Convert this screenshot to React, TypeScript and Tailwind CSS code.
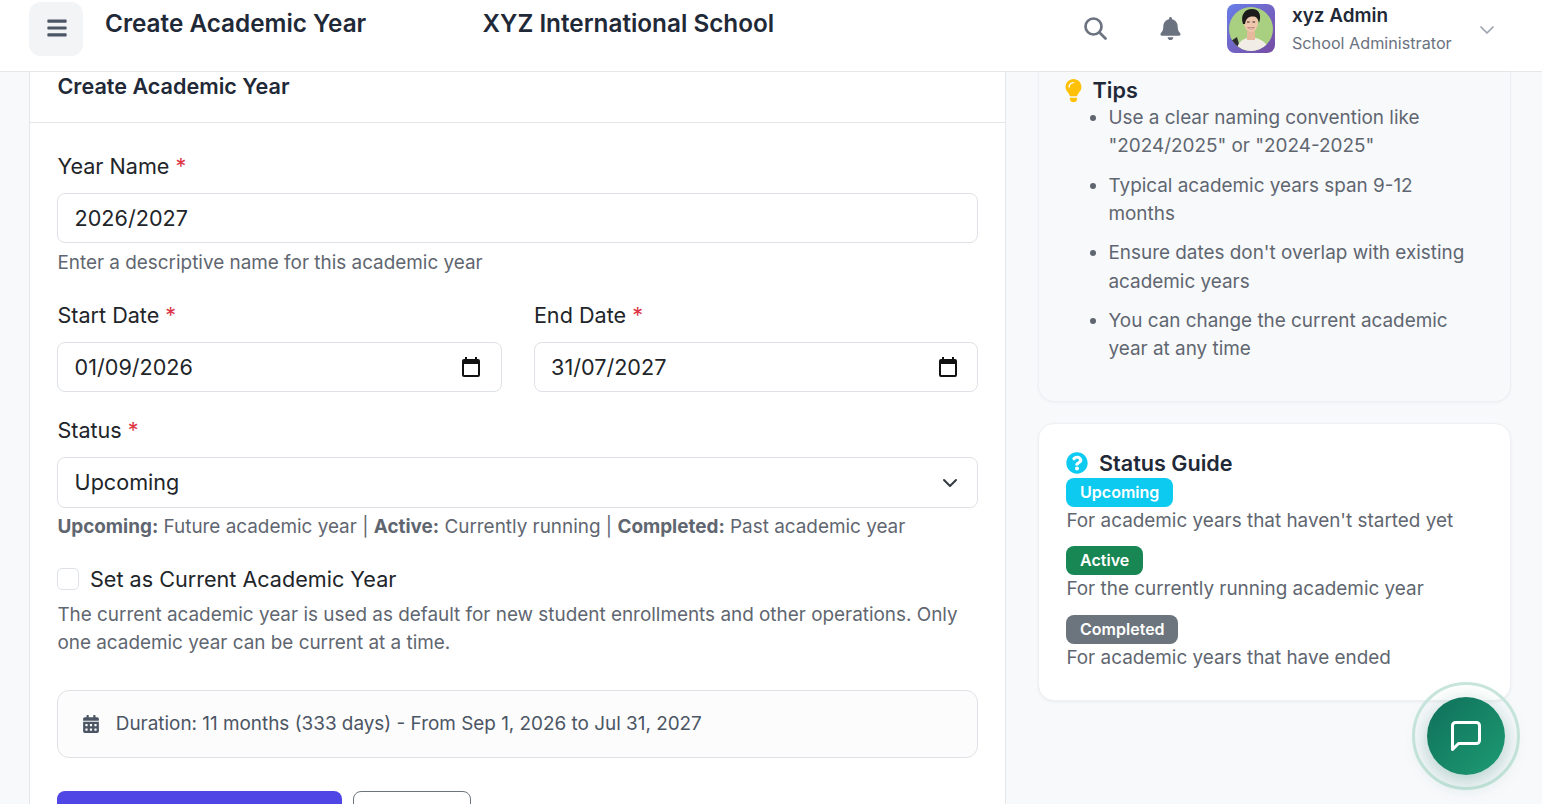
import React from "react";
import { FaBars, FaBell, FaLightbulb, FaQuestionCircle, FaCalendarAlt } from "react-icons/fa";

function Req() {
  return <span className="text-[#dc3545]"> *</span>;
}

function CalIcon() {
  return (
    <svg width="24" height="24" viewBox="0 0 24 24" fill="#111" className="shrink-0">
      <path d="M19 4h-1V2h-2v2H8V2H6v2H5a2 2 0 0 0-2 2v14a2 2 0 0 0 2 2h14a2 2 0 0 0 2-2V6a2 2 0 0 0-2-2zm0 16H5V9h14v11z" />
    </svg>
  );
}

function SearchIcon() {
  return (
    <svg width="23" height="23" viewBox="0 0 23 23" fill="none" stroke="#6b7280" strokeWidth="2.7" strokeLinecap="round" className="shrink-0 mt-[17px]">
      <circle cx="9.5" cy="9.5" r="8" />
      <path d="M15.5 15.5 21.5 21.5" />
    </svg>
  );
}

function Avatar() {
  return (
    <div className="w-12 h-[49px] rounded-lg bg-gradient-to-br from-[#667eea] to-[#764ba2] flex items-center justify-center shrink-0">
      <svg width="44" height="44" viewBox="0 0 44 44">
        <defs>
          <clipPath id="av">
            <circle cx="22" cy="22" r="22" />
          </clipPath>
        </defs>
        <g clipPath="url(#av)">
          <rect width="44" height="44" fill="#a9cf80" />
          <path d="M2 34 L8 30 L12 44 L2 44Z" fill="#2c2c30" />
          <path d="M8 44 C8 36 12 33 18 31 L27 31 C34 33 39 37 40 44Z" fill="#f1ede6" />
          <rect x="18" y="24" width="8" height="9" fill="#e7b99c" />
          <ellipse cx="22" cy="16" rx="7" ry="9" fill="#efc7ad" />
          <path d="M14 17 C11 8 16 2 23 2 C30 2 33 8 30 16 C29 11 27 9.5 24 9.5 C20 9.5 17 11 16 17Z" fill="#1d1a1c" />
          <path d="M18 15h2.6M23.5 15h2.6" stroke="#2b2020" strokeWidth="1.1" />
          <path d="M18.5 20.5 C20 22.5 24 22.5 25.5 20.5Z" stroke="#b9786a" strokeWidth="0.8" fill="#fff" />
        </g>
      </svg>
    </div>
  );
}

function Badge({ color, children }: { color: string; children: React.ReactNode }) {
  return (
    <span className={`inline-block rounded-[8px] px-[13.7px] h-[29px] leading-[29px] text-[16px] font-semibold text-white ${color}`}>
      {children}
    </span>
  );
}

export default function App() {
  return (
    <div className="h-[804px] w-[1542px] overflow-hidden bg-[#f8f9fb] font-['Inter','Noto_Sans',sans-serif] text-[#212529]">
      <header className="h-[72px] bg-white border-b border-[#e5e7eb] flex items-start pl-[29px] pr-[32px]">
        <button className="mt-[2px] w-[54px] h-[54px] rounded-xl bg-[#f3f4f6] flex items-center justify-center text-[#4b5563]">
          <FaBars size={22} className="ml-[2px] -mt-[3px]" />
        </button>
        <h1 className="ml-[22px] w-[377.6px] mt-[7px] text-[24.3px] leading-[32px] font-semibold text-[#1f2937]">Create Academic Year</h1>
        <div className="mt-[7px] w-[601.4px] text-[24.3px] leading-[32px] font-semibold text-[#1f2937]">XYZ International School</div>
        <div className="flex items-start flex-1">
          <SearchIcon />
          <FaBell size={23} className="text-[#6b7280] mt-[16.5px] ml-[52px]" />
          <div className="ml-[45px] mt-[4px]"><Avatar /></div>
          <div className="ml-[17px]">
            <div className="text-[18.9px] leading-[24px] font-semibold text-[#1f2937] mt-[4px]">xyz Admin</div>
            <div className="text-[16.2px] leading-[24px] text-[#6b7280] mt-[3px]">School Administrator</div>
          </div>
          <svg width="24" height="24" viewBox="0 0 24 24" fill="none" stroke="#9ca3af" strokeWidth="1.75" strokeLinecap="round" strokeLinejoin="round" className="mt-[18px] ml-[23px] shrink-0">
            <path d="m6 9 6 6 6-6" />
          </svg>
        </div>
      </header>

      <main className="flex items-start pl-[29px] gap-[32px]">
        <section className="w-[977px] h-[740px] bg-white border-x border-[#e5e7eb] shrink-0">
          <div className="h-[51px] border-b border-[#e5e7eb] px-[27.4px]">
            <h2 className="text-[21.6px] leading-[28px] font-semibold text-[#1f2937]">Create Academic Year</h2>
          </div>
          <div className="px-[27.4px] pt-[28px]">
            <label className="block text-[21.6px] leading-[31px] text-[#212529]">Year Name<Req /></label>
            <div className="mt-[11px] h-[50px] w-[921px] rounded-[8px] border border-[#dee2e6] flex items-center pl-[16.2px] text-[21.6px]">2026/2027</div>
            <p className="mt-[6px] text-[18.9px] leading-[28px] text-[#5f6670]">Enter a descriptive name for this academic year</p>

            <div className="mt-[23px] grid grid-cols-2 gap-[32px] w-[921px]">
              <div>
                <label className="block text-[21.6px] leading-[31px]">Start Date<Req /></label>
                <div className="mt-[11px] h-[50px] rounded-[8px] border border-[#dee2e6] flex items-center justify-between pl-[16.2px] pr-[17.6px] text-[21.6px]">01/09/2026<CalIcon /></div>
              </div>
              <div>
                <label className="block text-[21.6px] leading-[31px]">End Date<Req /></label>
                <div className="mt-[11px] h-[50px] rounded-[8px] border border-[#dee2e6] flex items-center justify-between pl-[16.2px] pr-[17.6px] text-[21.6px]">31/07/2027<CalIcon /></div>
              </div>
            </div>

            <label className="block mt-[23px] text-[21.6px] leading-[31px]">Status<Req /></label>
            <div className="mt-[11px] h-[51px] w-[921px] rounded-[8px] border border-[#dee2e6] flex items-center justify-between pl-[16.2px] pr-[19px] text-[21.6px]">
              Upcoming
              <svg width="16" height="16" viewBox="0 0 16 16" fill="none" stroke="#343a40" strokeWidth="2" strokeLinecap="round" strokeLinejoin="round" className="shrink-0">
                <path d="m2 5 6 6 6-6" />
              </svg>
            </div>
            <p className="mt-[5px] text-[18.9px] leading-[28px] text-[#5f6670]">
              <strong className="font-bold">Upcoming:</strong> Future academic year | <strong className="font-bold">Active:</strong> Currently running | <strong className="font-bold">Completed:</strong> Past academic year
            </p>

            <div className="mt-[24px] flex items-center h-[28px]">
              <span className="w-[22px] h-[22px] rounded-[5px] border border-[#dee2e6] bg-white shrink-0" />
              <span className="ml-[10.6px] text-[21.6px] text-[#212529]">Set as Current Academic Year</span>
            </div>
            <p className="mt-[8px] w-[921px] text-[18.9px] leading-[28px] text-[#5f6670]">
              The current academic year is used as default for new student enrollments and other operations. Only one academic year can be current at a time.
            </p>

            <div className="mt-[33px] h-[68px] w-[921px] rounded-xl border border-[#dee2e6] bg-[#fcfcfd] flex items-center pl-[24px] text-[18.9px] text-[#4b5563]">
              <FaCalendarAlt size={18} className="text-[#4b5563]" />
              <span className="ml-[15.4px]">Duration: 11 months (333 days) - From Sep 1, 2026 to Jul 31, 2027</span>
            </div>

            <div className="mt-[33px] flex gap-[11px]">
              <div className="w-[285px] h-[50px] rounded-[8px] bg-[#4f46e5]" />
              <div className="w-[118px] h-[50px] rounded-[8px] border border-[#6c757d] bg-white" />
            </div>
          </div>
        </section>

        <aside className="w-[473px] shrink-0">
          <div className="h-[330px] bg-[#f8f9fb] border border-t-0 border-[#eef0f3] rounded-b-2xl pl-[27px] pr-[27px] shadow-[0_1px_3px_rgba(0,0,0,0.04)]">
            <h3 className="flex items-center text-[21.6px] leading-[26px] font-semibold text-[#1f2937] pt-[4px] h-[32px]">
              <FaLightbulb size={23} className="text-[#ffc107] -ml-[4px] mr-[7.5px]" />
              Tips
            </h3>
            <ul className="list-disc pl-[42.5px] text-[18.9px] leading-[28.35px] text-[#5f6670] marker:text-[#5f6670]">
              <li className="mb-[11px]">Use a clear naming convention like "2024/2025" or "2024-2025"</li>
              <li className="mb-[11px]">Typical academic years span 9-12 months</li>
              <li className="mb-[11px]">Ensure dates don't overlap with existing academic years</li>
              <li>You can change the current academic year at any time</li>
            </ul>
          </div>

          <div className="mt-[21px] h-[278px] bg-white border border-[#eef0f3] rounded-2xl pl-[27.4px] pr-[20px] pt-[26px] shadow-[0_1px_3px_rgba(0,0,0,0.06)]">
            <h3 className="flex items-center text-[21.6px] leading-[26px] font-semibold text-[#1f2937]">
              <FaQuestionCircle size={22} className="text-[#0dcaf0] mr-[10.6px]" />
              Status Guide
            </h3>
            <div className="mt-[2px]"><Badge color="bg-[#0dcaf0]">Upcoming</Badge></div>
            <p className="text-[18.9px] leading-[28.35px] text-[#5f6670]">For academic years that haven't started yet</p>
            <div className="mt-[11px]"><Badge color="bg-[#198754]">Active</Badge></div>
            <p className="text-[18.9px] leading-[28.35px] text-[#5f6670]">For the currently running academic year</p>
            <div className="mt-[11px]"><Badge color="bg-[#6c757d]">Completed</Badge></div>
            <p className="text-[18.9px] leading-[28.35px] text-[#5f6670]">For academic years that have ended</p>
          </div>
        </aside>
      </main>

      <div className="fixed left-[1412px] top-[682px] w-[108px] h-[108px] rounded-full border-[3px] border-[#c9e6dc] flex items-center justify-center">
        <button className="w-[78px] h-[78px] rounded-full bg-gradient-to-br from-[#0f705a] to-[#1e9b73] flex items-center justify-center text-white shadow-[0_6px_22px_rgba(15,112,90,0.32)]">
          <svg width="36" height="36" viewBox="0 0 24 24" fill="none" stroke="currentColor" strokeWidth="2" strokeLinecap="round" strokeLinejoin="round">
            <path d="M21 15a2 2 0 0 1-2 2H7l-4 4V5a2 2 0 0 1 2-2h14a2 2 0 0 1 2 2z" />
          </svg>
        </button>
      </div>
    </div>
  );
}
